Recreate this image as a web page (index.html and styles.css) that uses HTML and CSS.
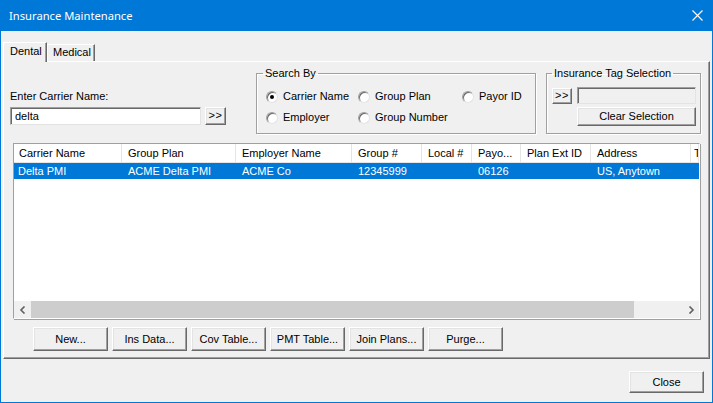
FILE: index.html
```html
<!DOCTYPE html>
<html>
<head>
<meta charset="utf-8">
<link rel="stylesheet" href="styles.css">
</head>
<body>
<div class="window">
  <div class="titlebar">
    <span class="title">Insurance Maintenance</span>
    <svg class="close-x" width="11" height="11" viewBox="0 0 11 11"><path d="M0.5 0.5 L10.5 10.5 M10.5 0.5 L0.5 10.5" stroke="#fff" stroke-width="1.1" fill="none"/></svg>
  </div>
  <div class="tabs">
    <div class="tab active">Dental</div>
    <div class="tab">Medical</div>
  </div>
  <div class="panel">
    <div class="top">
      <div class="carrier">
        <div class="label">Enter Carrier Name:</div>
        <div class="carrier-row">
          <div class="input carrier-input">delta</div>
          <div class="btn go">&gt;&gt;</div>
        </div>
      </div>
      <fieldset class="group search">
        <legend>Search By</legend>
        <div class="radios">
          <div class="radio"><span class="dot checked"></span>Carrier Name</div>
          <div class="radio"><span class="dot"></span>Group Plan</div>
          <div class="radio"><span class="dot"></span>Payor ID</div>
          <div class="radio"><span class="dot"></span>Employer</div>
          <div class="radio"><span class="dot"></span>Group Number</div>
        </div>
      </fieldset>
      <fieldset class="group tag">
        <legend>Insurance Tag Selection</legend>
        <div class="tag-row">
          <div class="btn tag-go">&gt;&gt;</div>
          <div class="input tag-input"></div>
        </div>
        <div class="btn clear">Clear Selection</div>
      </fieldset>
    </div>
    <div class="list">
      <div class="cols header">
        <div class="hcell first">Carrier Name</div>
        <div class="hcell">Group Plan</div>
        <div class="hcell">Employer Name</div>
        <div class="hcell">Group #</div>
        <div class="hcell">Local #</div>
        <div class="hcell">Payo...</div>
        <div class="hcell">Plan Ext ID</div>
        <div class="hcell">Address</div>
        <div class="hcell last">T</div>
      </div>
      <div class="cols row selected">
        <div class="cell first">Delta PMI</div>
        <div class="cell">ACME Delta PMI</div>
        <div class="cell">ACME Co</div>
        <div class="cell">12345999</div>
        <div class="cell"></div>
        <div class="cell">06126</div>
        <div class="cell"></div>
        <div class="cell">US, Anytown</div>
        <div class="cell"></div>
      </div>
      <div class="list-space"></div>
      <div class="hscroll">
        <div class="arrow"><svg width="8" height="8" viewBox="0 0 8 8"><path d="M5.5 0.5 L2 4 L5.5 7.5" stroke="#606060" stroke-width="1.6" fill="none"/></svg></div>
        <div class="track"><div class="thumb"></div></div>
        <div class="arrow"><svg width="8" height="8" viewBox="0 0 8 8"><path d="M2.5 0.5 L6 4 L2.5 7.5" stroke="#606060" stroke-width="1.6" fill="none"/></svg></div>
      </div>
    </div>
    <div class="actions">
      <div class="btn action">New...</div>
      <div class="btn action">Ins Data...</div>
      <div class="btn action">Cov Table...</div>
      <div class="btn action">PMT Table...</div>
      <div class="btn action">Join Plans...</div>
      <div class="btn action">Purge...</div>
    </div>
  </div>
  <div class="footer">
    <div class="btn close">Close</div>
  </div>
</div>
</body>
</html>
```
FILE: styles.css
```css
* { box-sizing: border-box; }
html, body { margin: 0; padding: 0; }
body {
  width: 713px;
  height: 403px;
  overflow: hidden;
  font-family: "Liberation Sans", Arial, sans-serif;
  font-size: 11px;
  color: #000;
}
.window {
  width: 713px;
  height: 403px;
  border: 1px solid #0078d7;
  background: #f0f0f0;
  display: flex;
  flex-direction: column;
}
.titlebar {
  height: 30px;
  flex: none;
  background: #0078d7;
  display: flex;
  align-items: center;
  justify-content: space-between;
  padding: 0 9px 0 8px;
}
.title {
  color: #fff;
  font-family: "Noto Sans", "Liberation Sans", sans-serif;
  font-size: 11.2px;
  line-height: 14px;
}
.close-x { display: block; margin-top: -1px; }

.tabs {
  display: flex;
  align-items: flex-end;
  height: 19px;
  margin-top: 11px;
  padding-left: 2px;
  flex: none;
}
.tab {
  height: 17px;
  line-height: 15px;
  padding: 0 5px 0 5px;
  border-top: 1px solid #fff;
  border-left: 1px solid #fff;
  border-right: 1px solid #696969;
  box-shadow: inset -1px 0 #a0a0a0;
  background: #f0f0f0;
}
.tab.active {
  height: 20px;
  line-height: 17px;
  width: 44px;
  padding-left: 6px;
  margin-bottom: -1px;
  position: relative;
  z-index: 1;
}
.tab:not(.active) { width: 48px; }

.panel {
  margin: 0 2px 0 2px;
  height: 298px;
  flex: none;
  border-top: 1px solid #fff;
  border-left: 1px solid #fff;
  border-right: 1px solid #696969;
  border-bottom: 1px solid #696969;
  box-shadow: inset -1px -1px #a0a0a0;
  display: flex;
  flex-direction: column;
}
.top {
  height: 72px;
  display: flex;
  align-items: flex-start;
  padding-left: 6px;
  flex: none;
}
.carrier {
  width: 222px;
  padding-top: 28px;
}
.label { line-height: 13px; height: 13px; }
.carrier-row {
  display: flex;
  gap: 4px;
  margin-top: 4px;
}
.input {
  background: #fff;
  border-top: 1px solid #a0a0a0;
  border-left: 1px solid #a0a0a0;
  border-right: 1px solid #e3e3e3;
  border-bottom: 1px solid #e3e3e3;
  box-shadow: inset 1px 1px #696969;
}
.carrier-input {
  width: 191px;
  height: 18px;
  line-height: 16px;
  padding-left: 4px;
}
.btn {
  background: #f0f0f0;
  border-top: 1px solid #fff;
  border-left: 1px solid #fff;
  border-right: 1px solid #696969;
  border-bottom: 1px solid #696969;
  box-shadow: inset -1px -1px #a0a0a0, inset 1px 1px #e3e3e3;
  text-align: center;
  white-space: nowrap;
}
.go {
  width: 21px;
  height: 18px;
  line-height: 15px;
  letter-spacing: 0.5px;
}

.group {
  margin: 5px 0 0 0;
  height: 67px;
  border: 1px solid #a0a0a0;
  box-shadow: 1px 1px 0 #fff, inset 1px 1px 0 #fff;
  padding: 0;
}
.group legend {
  padding: 0 2px;
  margin-left: -3px;
  line-height: 13px;
  font-size: 11px;
}
.search {
  width: 280px;
  margin-left: 24px;
  padding: 6px 0 0 9px;
}
.radios {
  display: grid;
  grid-template-columns: 92px 104px 1fr;
  grid-auto-rows: 21px;
}
.radio {
  display: flex;
  align-items: center;
  gap: 5px;
  line-height: 13px;
}
.dot {
  width: 12px;
  height: 12px;
  border-radius: 50%;
  background: #fff;
  border: 1px solid;
  border-color: #a0a0a0 #e3e3e3 #e3e3e3 #a0a0a0;
  box-shadow: inset 1px 1px #696969;
  display: flex;
  align-items: center;
  justify-content: center;
  flex: none;
}
.dot.checked::after {
  content: "";
  width: 4px;
  height: 4px;
  border-radius: 50%;
  background: #000;
}
.tag {
  width: 155px;
  margin-left: 10px;
  padding: 7px 0 0 5px;
}
.tag legend { margin-left: 0; }
.tag-row {
  display: flex;
  gap: 5px;
  align-items: flex-end;
}
.tag-go {
  width: 20px;
  height: 16px;
  line-height: 13px;
  letter-spacing: 0.5px;
}
.tag-input {
  width: 119px;
  height: 17px;
  background: #f0f0f0;
}
.clear {
  width: 119px;
  height: 19px;
  line-height: 17px;
  margin: 3px 0 0 25px;
}

.list {
  margin: 9px 9px 0 9px;
  height: 176px;
  flex: none;
  background: #fff;
  border-top: 1px solid #a0a0a0;
  border-left: 1px solid #a0a0a0;
  border-right: 1px solid #fff;
  border-bottom: 1px solid #fff;
  box-shadow: 1px 1px 0 #a0a0a0;
  display: flex;
  flex-direction: column;
  overflow: hidden;
}
.cols {
  display: grid;
  grid-template-columns: 108px 114px 116px 70px 50px 49px 70px 100px 1fr;
  flex: none;
}
.header { height: 19px; }
.hcell {
  border-right: 1px solid #e5e5e5;
  border-bottom: 1px solid #e5e5e5;
  padding-left: 6px;
  line-height: 18px;
  white-space: nowrap;
  overflow: hidden;
}
.hcell.first { padding-left: 5px; }
.hcell.last { padding-left: 3px; }
.row { height: 16px; }
.cell {
  padding-left: 6px;
  line-height: 16px;
  white-space: nowrap;
  overflow: hidden;
}
.cell.first { padding-left: 4px; }
.selected {
  background: #0078d7;
  color: #fff;
}
.list-space { flex: 1; }
.hscroll {
  height: 17px;
  flex: none;
  display: flex;
  background: #f0f0f0;
}
.arrow {
  width: 17px;
  height: 17px;
  display: flex;
  align-items: center;
  justify-content: center;
  flex: none;
}
.track { flex: 1; }
.thumb {
  width: 603px;
  height: 17px;
  background: #cdcdcd;
}

.actions {
  display: flex;
  gap: 4px;
  margin-top: 8px;
  padding-left: 29px;
  flex: none;
}
.action {
  width: 75px;
  height: 24px;
  line-height: 22px;
}
.footer {
  display: flex;
  justify-content: flex-end;
  padding: 12px 8px 0 0;
}
.close {
  width: 75px;
  height: 22px;
  line-height: 20px;
}
```
